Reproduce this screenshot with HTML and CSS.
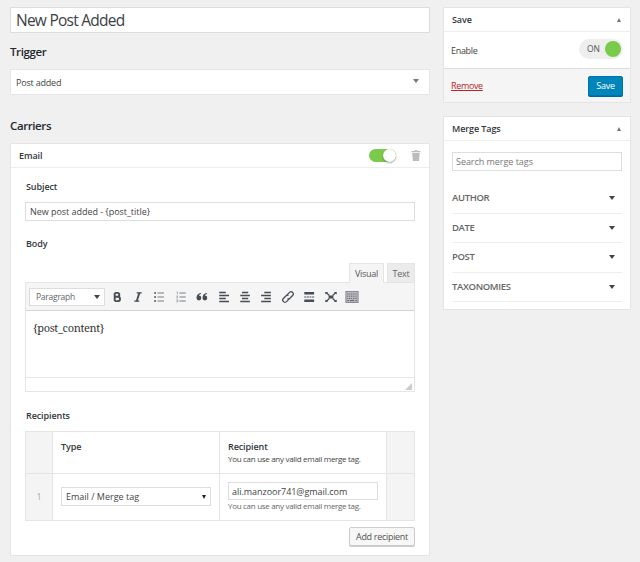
FILE: index.html
```html
<!DOCTYPE html>
<html lang="en">
<head>
    <meta charset="UTF-8">
    <meta name="viewport" content="width=device-width, initial-scale=1.0">
    <title>Edit Notification</title>
    <link rel="stylesheet" href="styles.css">
</head>
<body>

<div class="wrap">
    <main class="main">
        <input class="title" type="text" value="New Post Added">

        <h2 class="trigger-title">Trigger</h2>
        <div class="trigger-select">
            <span>Post added</span>
            <i class="arrow-down grey"></i>
        </div>

        <h2 class="carriers-title">Carriers</h2>
        <section class="carrier">
            <header class="carrier-head">
                <h3>Email</h3>
                <span class="switch"><i></i></span>
                <svg class="trash" viewBox="0 0 10 11" fill="#bcbcbc">
                    <path d="M3.2 1V0.2h3.4V1H9.4v1.2H0.4V1z"/>
                    <path d="M1.1 3h7.6L8 11H1.9z"/>
                </svg>
            </header>
            <div class="carrier-body">
                <label for="subject">Subject</label>
                <input id="subject" class="field" type="text" value="New post added - {post_title}">

                <label class="body-label">Body</label>
                <div class="tabs">
                    <button type="button" class="tab active">Visual</button>
                    <button type="button" class="tab">Text</button>
                </div>
                <div class="editor">
                    <div class="toolbar">
                        <div class="format"><span>Paragraph</span><i class="arrow-down"></i></div>
                        <span class="tool"><svg viewBox="0 0 14 14"><path d="M4.7 2.9v8.2M4.7 2.9h2.7a1.85 1.85 0 0 1 0 3.8H4.7h3.1a2.2 2.2 0 0 1 0 4.4h-3.1" fill="none" stroke-width="1.9"/></svg></span>
                        <span class="tool"><svg viewBox="0 0 14 14"><path d="M5.7 2.8h5M3.3 11.2h5" stroke-width="1.3"/><path d="M8.4 2.8L5.7 11.2" stroke-width="1.9"/></svg></span>
                        <span class="tool"><svg viewBox="0 0 14 14"><path d="M5.4 3h6.6M5.4 7h6.6M5.4 11h6.6" stroke="#7b8086" stroke-width="1.2"/><path d="M2.2 3h1.8M2.2 7h1.8M2.2 11h1.8" stroke-width="1.7"/></svg></span>
                        <span class="tool"><svg viewBox="0 0 14 14"><path d="M5.4 3h6.4M5.4 7h6.4M5.4 11h6.4" stroke="#7b8086" stroke-width="1.2"/><path d="M2.6 2h.8v2.3M2.4 6h1.4L2.6 7.9h1.4M2.4 9.8h1.4v2.2H2.4M2.8 10.9h1" fill="none" stroke="#8b9096" stroke-width=".7"/></svg></span>
                        <span class="tool"><svg viewBox="0 0 14 14"><path d="M6 3C3 3.2 1.5 5.2 1.5 8a2.4 2.4 0 1 0 2.4-2.4C4.2 4.6 5 4.1 6 4zM12 3C9 3.2 7.5 5.2 7.5 8a2.4 2.4 0 1 0 2.4-2.4c.3-1 1.1-1.5 2.1-1.6z" stroke="none" fill="#464d55"/></svg></span>
                        <span class="tool"><svg viewBox="0 0 14 14"><path d="M2.2 2.5h6.6M2.2 5.5h9.8M2.2 8.5h6.6M2.2 11.5h9.8"/></svg></span>
                        <span class="tool"><svg viewBox="0 0 14 14"><path d="M4 2.5h6.2M2.3 5.5h9.6M4 8.5h6.2M2.3 11.5h9.6"/></svg></span>
                        <span class="tool"><svg viewBox="0 0 14 14"><path d="M5.3 2.5h6.6M2.1 5.5h9.8M5.3 8.5h6.6M2.1 11.5h9.8"/></svg></span>
                        <span class="tool"><svg viewBox="0 0 14 14"><g transform="rotate(-45 7 7)" fill="none" stroke-width="1.3"><path d="M6.500 9.200H2.700a2.200 2.200 0 0 1 0-4.400h3.800a2.200 2.200 0 0 1 2 1.500"/><path d="M7.500 4.800h3.800a2.200 2.200 0 0 1 0 4.400H7.500a2.200 2.200 0 0 1-2-1.500"/></g></svg></span>
                        <span class="tool"><svg viewBox="0 0 14 14"><path d="M2.3 3.2h9.8M2.3 10.8h9.8" stroke-width="2.6"/><path d="M2.3 7h9.8" stroke-width="1.2" stroke-dasharray="2 .6"/></svg></span>
                        <span class="tool"><svg viewBox="0 0 14 14"><path d="M2 2.5l3.4 3M12 2.5l-3.4 3M2 11.5l3.4-3M12 11.5l-3.4-3" stroke-width="1.2"/><path d="M1.3 2v2.5L4.200 2zM12.700 2v2.500L9.800 2zM1.300 12V9.500L4.200 12zM12.700 12V9.500L9.800 12zM4.600 5.500h4.800v3H4.600z" stroke="none" fill="#464d55"/></svg></span>
                        <span class="tool"><svg viewBox="0 0 14 14"><rect x=".9" y="1.5" width="12.2" height="11" fill="#b9bbc1" stroke="#858188" stroke-width=".9"/><path d="M2.3 4h9.5M2.3 6.2h9.5M2.3 8.4h9.5" stroke="#5f6472" stroke-width="1" stroke-dasharray="1 .8"/><path d="M2.3 10.6h1.5M4.8 10.6h4.5M10.3 10.6h1.5" stroke="#555a66" stroke-width=".9"/></svg></span>
                    </div>
                    <div class="content">{post_content}</div>
                    <div class="status">
                        <svg viewBox="0 0 7 7"><path d="M7 0v7H0z" fill="#cfc8ce"/></svg>
                    </div>
                </div>

                <label class="recipients-label">Recipients</label>
                <div class="recipients">
                    <div class="side"></div>
                    <div class="cell"><strong>Type</strong></div>
                    <div class="cell">
                        <strong>Recipient</strong>
                        <p>You can use any valid email merge tag.</p>
                    </div>
                    <div class="side"></div>
                    <div class="side">1</div>
                    <div class="cell middle">
                        <div class="select"><span>Email / Merge tag</span><i class="arrow-down"></i></div>
                    </div>
                    <div class="cell short">
                        <input class="field mail" type="text" value="ali.manzoor741@gmail.com">
                        <p class="muted">You can use any valid email merge tag.</p>
                    </div>
                    <div class="side"></div>
                </div>
                <button type="button" class="button add">Add recipient</button>
            </div>
        </section>
    </main>

    <aside class="sidebar">
        <section class="box save-box">
            <header><h3>Save</h3><i class="arrow-up"></i></header>
            <div class="enable">
                <span class="enable-text">Enable</span>
                <span class="on-switch">ON<i></i></span>
            </div>
            <footer>
                <a href="#">Remove</a>
                <button type="button" class="button primary">Save</button>
            </footer>
        </section>

        <section class="box tags-box">
            <header><h3>Merge Tags</h3><i class="arrow-up"></i></header>
            <div class="tags">
                <input class="field search" type="text" placeholder="Search merge tags">
                <ul>
                    <li><span>AUTHOR</span><i class="arrow-down"></i></li>
                    <li><span>DATE</span><i class="arrow-down"></i></li>
                    <li><span>POST</span><i class="arrow-down"></i></li>
                    <li><span>TAXONOMIES</span><i class="arrow-down"></i></li>
                </ul>
            </div>
        </section>
    </aside>
</div>

</body>
</html>
```

FILE: styles.css
```css
* {
    box-sizing: border-box;
}
body {
    margin: 0;
    height: 562px;
    overflow: hidden;
    background: #f0f0f0;
    color: #444;
    font-family: "Open Sans", "Noto Sans", sans-serif;
    font-size: 9px;
    line-height: 12px;
}
h2, h3, p, ul {
    margin: 0;
    padding: 0;
}
input, button {
    font-family: inherit;
    color: inherit;
    margin: 0;
}
.wrap {
    display: flex;
    gap: 13px;
    padding: 7px 9px 0 10px;
}
.main {
    width: 420px;
}
.sidebar {
    width: 188px;
}
.title {
    display: block;
    width: 100%;
    height: 26px;
    padding: 0 5px;
    border: 1px solid #ddd;
    background: #fff;
    color: #3c4146;
    font-size: 15.5px;
    letter-spacing: -0.75px;
}
h2 {
    color: #23282d;
    font-size: 11.5px;
    font-weight: 600;
    line-height: 16px;
    letter-spacing: -0.4px;
}
h3, label, strong {
    color: #32373c;
    font-size: 9px;
    font-weight: 600;
    letter-spacing: -0.1px;
}
.trigger-title {
    margin: 11px 0 9px;
}
.carriers-title {
    margin: 23px 0 9px;
}
.trigger-select {
    display: flex;
    justify-content: space-between;
    align-items: center;
    height: 26px;
    padding: 0 10px 2px 5px;
    border: 1px solid #e5e5e5;
    background: #fff;
    letter-spacing: -0.2px;
}
.trigger-select span {
    padding-top: 3px;
}
.arrow-down {
    width: 0;
    height: 0;
    border: 3px solid transparent;
    border-top: 4px solid #444;
    border-bottom: 0;
}
.arrow-down.grey {
    border-top-color: #777;
}
.arrow-up {
    width: 0;
    height: 0;
    border: 2.5px solid transparent;
    border-bottom: 4px solid #72777c;
    border-top: 0;
}

/* carrier */
.carrier {
    height: 413px;
    border: 1px solid #e5e5e5;
    background: #fff;
}
.carrier-head {
    display: flex;
    align-items: center;
    height: 24px;
    padding: 0 8px;
    border-bottom: 1px solid #eee;
}
.carrier-head h3 {
    flex: 1;
}
.switch {
    display: flex;
    justify-content: flex-end;
    width: 27px;
    height: 13px;
    margin-right: 15px;
    border-radius: 7px;
    background: #7acb4b;
}
.switch i {
    width: 13px;
    height: 13px;
    border-radius: 50%;
    background: #fff;
    box-shadow: 0 1px 2px rgba(0,0,0,0.35);
}
.trash {
    width: 10px;
    height: 11px;
}
.carrier-body {
    padding: 13px 14px 0;
}
label {
    display: block;
    height: 12px;
    padding-left: 1px;
}
.field {
    display: block;
    width: 100%;
    height: 19px;
    padding: 0 4px;
    border: 1px solid #ddd;
    background: #fff;
    color: #444;
    font-size: 9px;
    letter-spacing: -0.04px;
}
#subject {
    margin-top: 9px;
}
.body-label {
    margin-top: 17px;
}
.tabs {
    display: flex;
    justify-content: flex-end;
    gap: 3px;
    height: 19px;
    margin-top: 13px;
}
.tab {
    width: 28px;
    height: 19px;
    padding: 0;
    border: 1px solid #e5e5e5;
    border-bottom: 0;
    background: #ebebeb;
    color: #666;
    font-size: 9px;
    letter-spacing: -0.25px;
}
.tab.active {
    z-index: 1;
    width: 35px;
    height: 20px;
    background: #f5f5f5;
    color: #555;
}
.editor {
    height: 110px;
    border: 1px solid #e5e5e5;
}
.toolbar {
    display: flex;
    align-items: center;
    height: 28px;
    padding-left: 3px;
    border-bottom: 1px solid #d4d4d4;
    background: #f5f5f5;
}
.format {
    display: flex;
    justify-content: space-between;
    align-items: center;
    width: 76px;
    height: 18px;
    margin-right: 1px;
    padding: 0 4px 0 6px;
    border: 1px solid #ddd;
    background: #fff;
    color: #666;
    font-size: 8.5px;
    letter-spacing: -0.25px;
}
.tool {
    display: flex;
    justify-content: center;
    width: 21.4px;
}
.tool svg {
    width: 14px;
    height: 14px;
    stroke: #464d55;
    stroke-width: 1.3;
}
.content {
    height: 66px;
    padding: 10px 7px;
    color: #333;
    font-family: "Noto Serif", "Liberation Serif", serif;
    font-size: 11px;
    line-height: 14px;
    letter-spacing: -0.35px;
}
.status {
    display: flex;
    justify-content: flex-end;
    align-items: flex-end;
    height: 14px;
    padding: 0 2px 1px;
    border-top: 1px solid #e5e5e5;
}
.status svg {
    width: 7px;
    height: 7px;
}
.recipients-label {
    margin-top: 18px;
}
.recipients {
    display: grid;
    grid-template-columns: 27px 167px 167px 28px;
    grid-template-rows: 42px 47px;
    height: 90px;
    margin-top: 9px;
    border: 1px solid #e5e5e5;
    border-right: 0;
    border-bottom: 0;
}
.side {
    display: flex;
    align-items: center;
    justify-content: center;
    border-right: 1px solid #e5e5e5;
    border-bottom: 1px solid #e5e5e5;
    background: #f4f4f4;
    color: #aaa;
}
.cell {
    padding: 9px 8px 0;
    border-right: 1px solid #e5e5e5;
    border-bottom: 1px solid #e5e5e5;
}
.cell strong {
    display: block;
}
.cell p {
    font-size: 8px;
    letter-spacing: -0.3px;
    white-space: nowrap;
}
.cell p.muted {
    color: #666;
}
.cell.middle {
    padding-top: 13px;
}
.cell.short {
    padding-top: 8px;
}
.select {
    display: flex;
    justify-content: space-between;
    align-items: center;
    height: 19px;
    padding: 0 4px;
    border: 1px solid #ddd;
}
.select .arrow-down {
    border-width: 4px 2px 0;
    border-top-color: #222;
}
.field.mail {
    height: 18px;
    padding: 0 3px;
}
.button {
    display: block;
    padding: 0;
    border: 1px solid #ccc;
    border-radius: 2px;
    background: #f7f7f7;
    color: #555;
    font-size: 9px;
    letter-spacing: -0.3px;
    box-shadow: 0 1px 0 #ccc;
}
.button.add {
    width: 66px;
    height: 19px;
    margin: 6px 0 0 auto;
}

/* sidebar */
.box {
    border: 1px solid #e5e5e5;
    background: #fff;
}
.box header {
    display: flex;
    justify-content: space-between;
    align-items: center;
    height: 24px;
    padding: 0 9px 0 8px;
    border-bottom: 1px solid #eee;
}
.save-box {
    height: 96px;
}
.enable {
    display: flex;
    justify-content: space-between;
    align-items: center;
    height: 36px;
    padding: 0 7px 2px;
}
.enable-text {
    padding-top: 3px;
    letter-spacing: -0.3px;
}
.on-switch {
    display: flex;
    justify-content: space-between;
    align-items: center;
    width: 44px;
    height: 20px;
    padding: 0 2px 0 8px;
    border-radius: 10px;
    background: #eee;
    color: #555;
    font-size: 8.5px;
}
.on-switch i {
    width: 16px;
    height: 16px;
    border-radius: 50%;
    background: #7acb4b;
}
.box footer {
    display: flex;
    justify-content: space-between;
    align-items: center;
    height: 34px;
    padding: 0 7px;
    border-top: 1px solid #ddd;
    background: #f5f5f5;
}
.box footer a {
    color: #b52727;
    letter-spacing: -0.35px;
}
.button.primary {
    width: 35px;
    height: 20px;
    border-color: #0073aa;
    background: #0085ba;
    color: #fff;
    box-shadow: 0 1px 0 #006799;
}
.tags-box {
    height: 194px;
    margin-top: 13px;
}
.tags {
    padding: 11px 8px 0;
}
.tags ul {
    margin-top: 13px;
    list-style: none;
}
.tags li {
    display: flex;
    justify-content: space-between;
    align-items: center;
    height: 29.5px;
    padding-right: 7px;
    border-bottom: 1px solid #eee;
    color: #666;
    font-size: 9.5px;
    font-weight: 600;
    letter-spacing: -0.35px;
}
.search {
    padding: 0 3px;
}
.search::placeholder {
    color: #777;
}
```
